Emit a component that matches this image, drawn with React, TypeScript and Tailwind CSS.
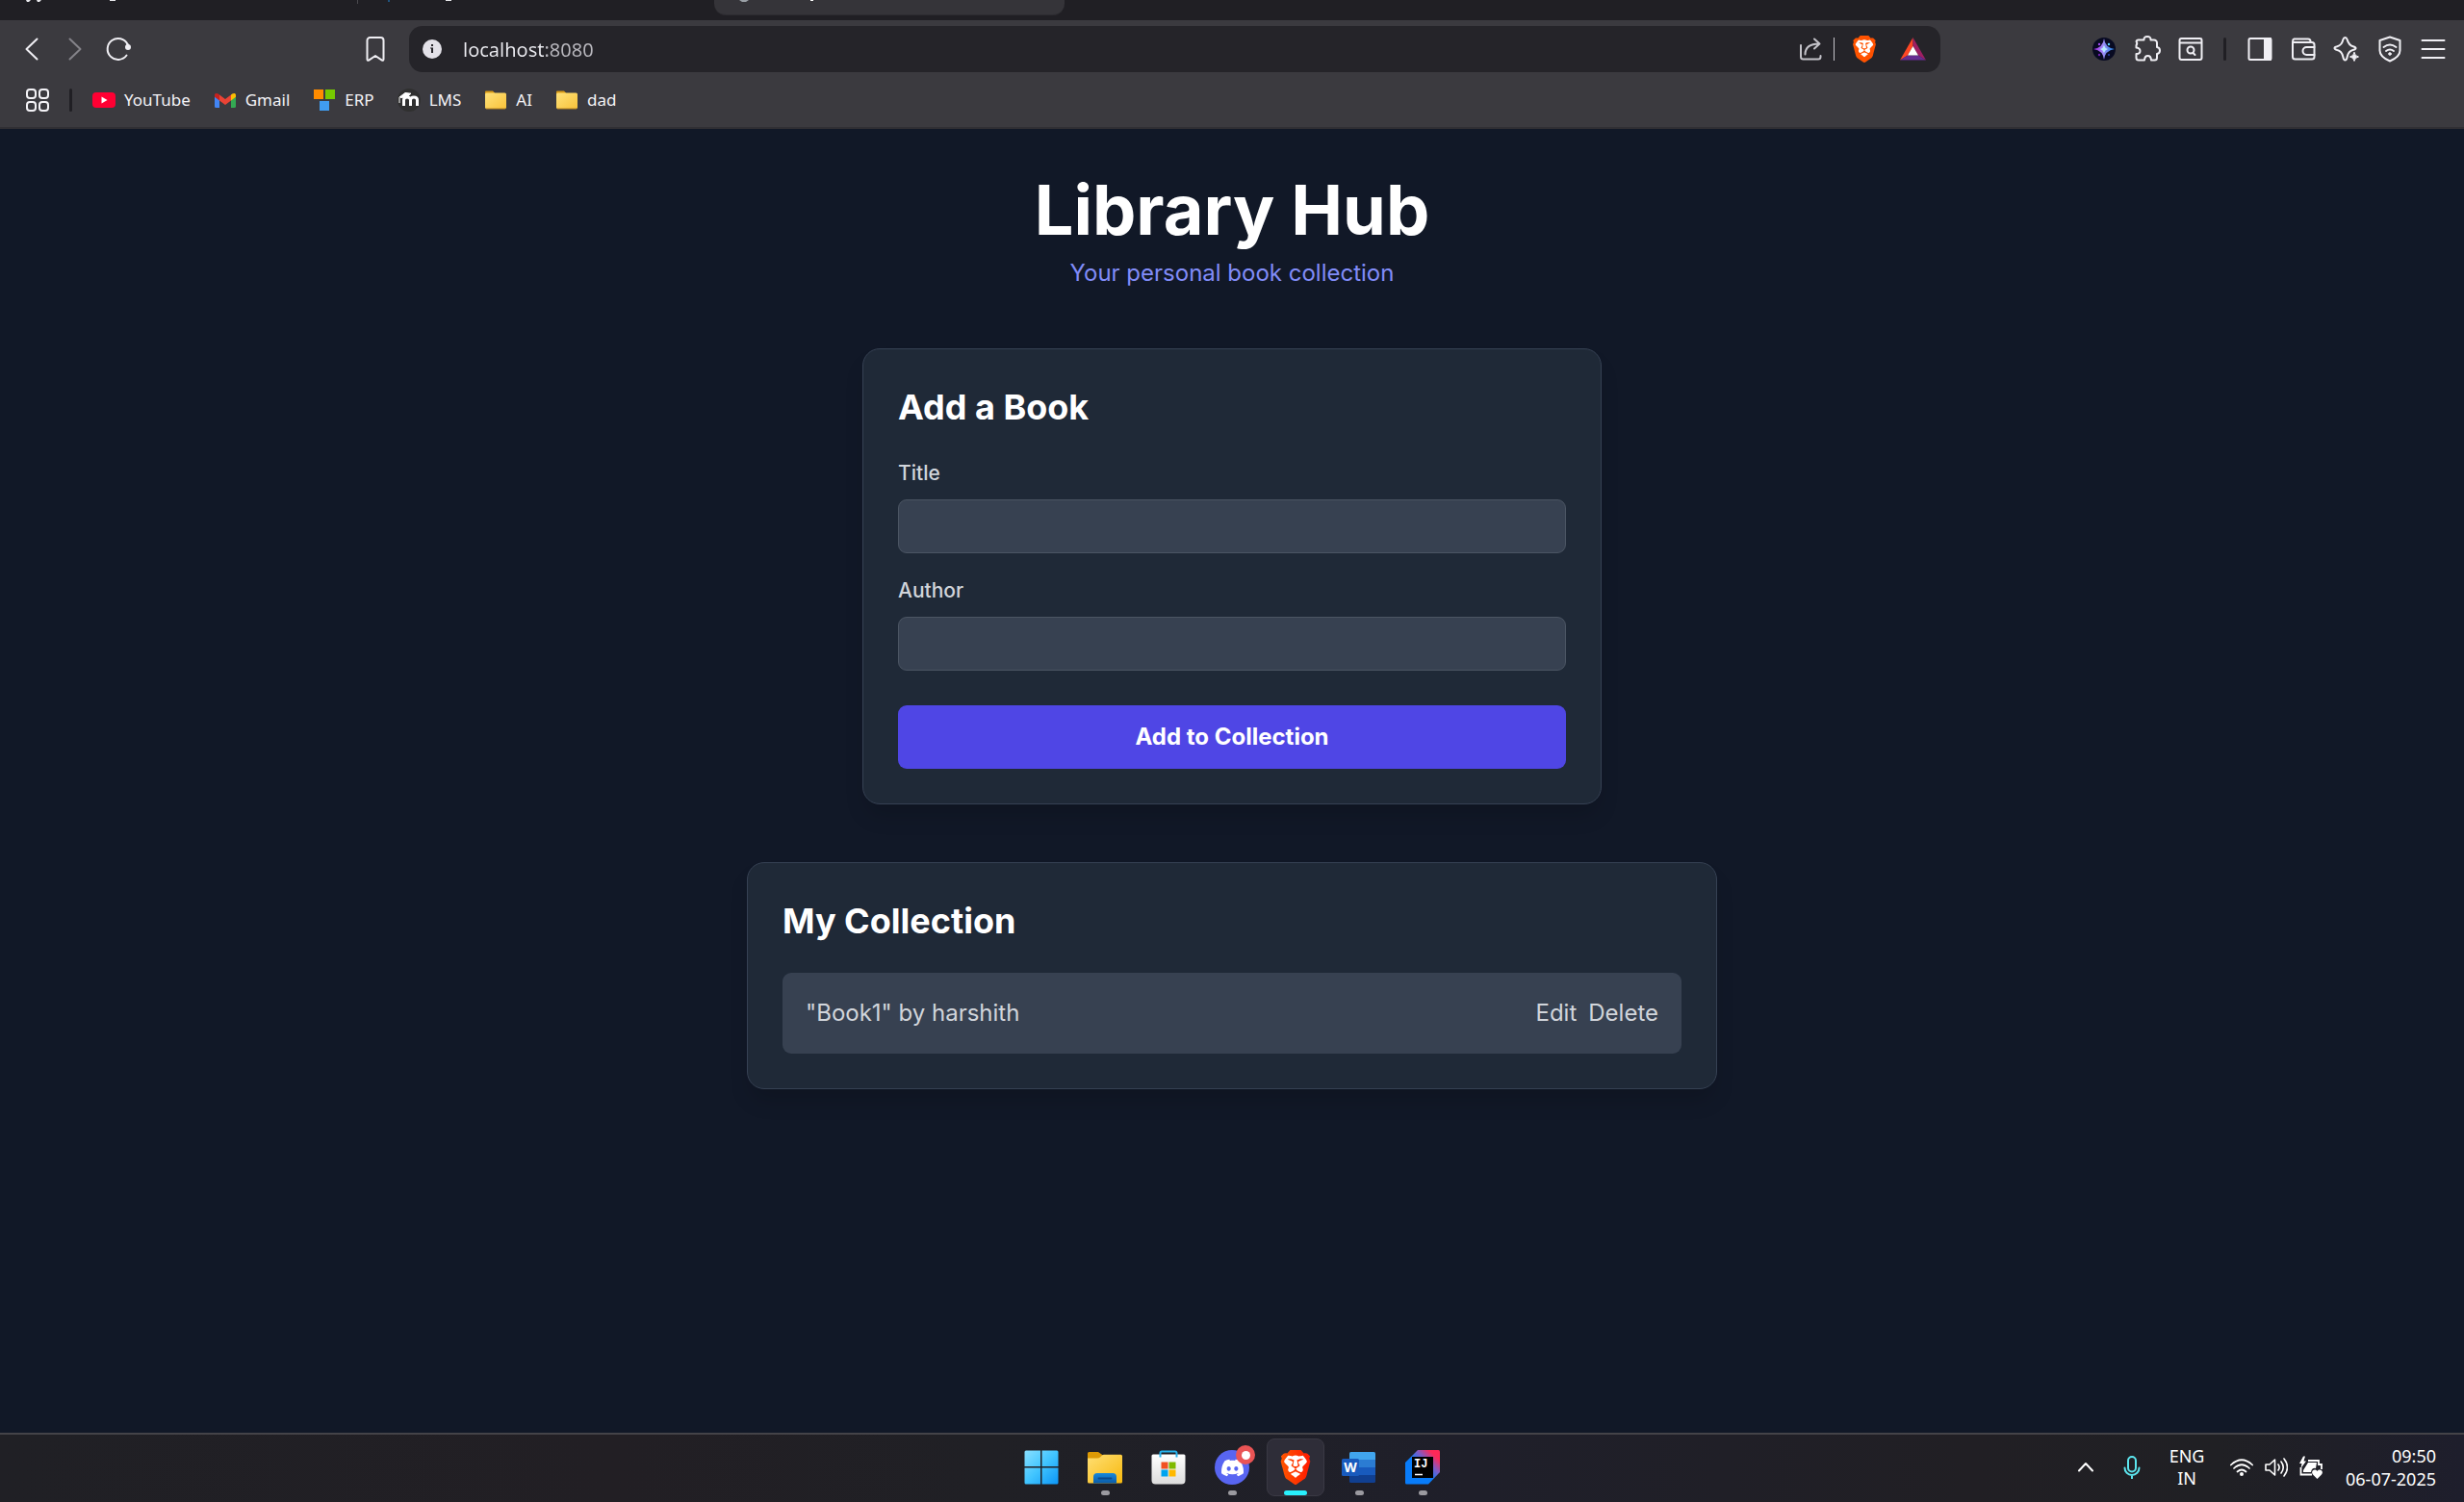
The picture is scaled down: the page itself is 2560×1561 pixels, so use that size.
import type { ReactNode } from "react";
import { SiBrave, SiDiscord } from "react-icons/si";

const UI_FONT = "font-['Noto_Sans','Open_Sans',sans-serif]";

function IconButton({ label, children }: { label: string; children: ReactNode }) {
  return (
    <button type="button" aria-label={label} className="flex h-12 w-[45px] shrink-0 items-center justify-center">
      {children}
    </button>
  );
}

function Stroke({ size = 30, width = 2, children }: { size?: number; width?: number; children: ReactNode }) {
  return (
    <svg width={size} height={size} viewBox="0 0 30 30" fill="none" stroke="currentColor" strokeWidth={width} strokeLinecap="round" strokeLinejoin="round">
      {children}
    </svg>
  );
}

function BraveLion({ size, id }: { size: number; id: string }) {
  return (
    <svg width={size} height={size} viewBox="0 0 24 24">
      <defs>
        <linearGradient id={id} x1="0" x2="1">
          <stop offset="0" stopColor="#ff5500" />
          <stop offset="1" stopColor={id === "lion-task" ? "#ff1a00" : "#ff5000"} />
        </linearGradient>
      </defs>
      <path d="M7 3h10l4 5-3 9-6 3-6-3-3-9z" fill="#fff" />
      <SiBrave size={24} style={{ fill: `url(#${id})` }} />
    </svg>
  );
}

/* ---------- Browser chrome ---------- */

function TabStrip() {
  return (
    <div className="flex h-[21px] bg-[#201f24]">
      <div className="h-1 w-[371px] overflow-hidden">
        <svg width="371" height="4" fill="#e8e8ec">
          <path d="M27 0h5l-2 2h-2zM38 0h5l-2 2h-2z" />
          <rect x="114" width="6" height="1" />
        </svg>
      </div>
      <div className="h-1 w-px bg-[#4a494e]" />
      <div className="h-1 w-[370px] overflow-hidden">
        <svg width="370" height="4">
          <rect x="31" width="2" height="2" fill="#20527c" />
          <rect x="91" width="6" height="1" fill="#e8e8ec" />
        </svg>
      </div>
      <div className="h-4 w-[364px] overflow-hidden rounded-b-xl border-b border-[#2c2b30] bg-[#353439]">
        <svg width="364" height="4">
          <path d="M26 0h10l-3 2h-4z" fill="#9aa0a6" />
          <rect x="100" width="3" height="1" fill="#fff" />
        </svg>
      </div>
    </div>
  );
}

function AddressBar() {
  return (
    <div className="flex h-12 min-w-0 flex-1 items-center rounded-[14px] bg-[#252429] pr-1 pl-[14px]">
      <button type="button" aria-label="View site information" className="shrink-0">
        <svg width="20" height="20" viewBox="0 0 20 20">
          <circle cx="10" cy="10" r="10" fill="#e3e1e8" />
          <rect x="9" y="5" width="2" height="2" fill="#252429" />
          <path d="M8 8.500h3V14H9v-4.500H8z" fill="#252429" />
        </svg>
      </button>
      <input
        type="text"
        aria-label="Address"
        defaultValue="localhost:8080"
        className="ml-[22px] h-8 min-w-0 flex-1 bg-[linear-gradient(90deg,#ececf1_84px,#b9b8be_84px)] bg-clip-text text-[20px] text-transparent outline-none"
      />
      <button type="button" aria-label="Share" className="flex w-12 justify-center text-[#c4c3c9]">
        <svg width="24" height="24" viewBox="0 0 24 24" fill="none" stroke="currentColor" strokeWidth="2" strokeLinecap="round" strokeLinejoin="round">
          <path d="M2 8v12a2.500 2.500 0 0 0 2.500 2.500H20a2.500 2.500 0 0 0 2.500-2.500v-1" />
          <path d="M6.500 17.500C6.500 10.500 11 6.500 21 6.500M16 1.500l5.500 5-5.500 5" />
        </svg>
      </button>
      <div className="mr-[6px] h-6 w-px bg-[#c4c3c9]" />
      <button type="button" aria-label="Brave Shields" className="flex w-[50px] justify-center">
        <BraveLion size={28} id="lion-bar" />
      </button>
      <button type="button" aria-label="Brave Rewards" className="flex w-[50px] justify-center">
        <svg width="27" height="24" viewBox="0 0 27 24">
          <path d="M13.500 0v9L8 18.500 0 23.500z" fill="#ff4724" />
          <path d="M13.500 0v9L19 18.500l8 5z" fill="#9e1f63" />
          <path d="M0 23.500 8 18.500h11l8 5z" fill="#662d91" />
          <path d="M13.500 9 19 18.500H8z" fill="#fff" />
        </svg>
      </button>
    </div>
  );
}

function Toolbar() {
  return (
    <div className="flex items-center pt-[6px] text-[#f0eff4]">
      <div className="flex w-[425px] shrink-0 justify-between pr-[13px] pl-[10px]">
        <div className="flex">
          <IconButton label="Back">
            <Stroke><path d="M20.500 4.500 9.500 15l11 10.500" /></Stroke>
          </IconButton>
          <IconButton label="Forward">
            <span className="text-[#848389]">
              <Stroke><path d="M9.500 4.500 20.500 15l-11 10.500" /></Stroke>
            </span>
          </IconButton>
          <IconButton label="Reload">
            <Stroke>
              <path d="M23.500 21.500A11 11 0 1 1 24.500 10" />
              <circle cx="25" cy="13" r="3" fill="currentColor" stroke="none" />
              <path d="M24.500 10l.5 3" />
            </Stroke>
          </IconButton>
        </div>
        <IconButton label="Bookmark this tab">
          <Stroke><path d="M6.500 25.500V6a3 3 0 0 1 3-3h11a3 3 0 0 1 3 3v19.500q0 2-2 .8L15 22l-6.500 4.300q-2 1.200-2-.8z" /></Stroke>
        </IconButton>
      </div>
      <AddressBar />
      <div className="flex w-[544px] shrink-0 items-center justify-end pr-[10px]">
        <IconButton label="Assistant extension">
          <svg width="24" height="24" viewBox="0 0 24 24">
            <defs>
              <linearGradient id="nova" x1="0" x2="1">
                <stop offset="0" stopColor="#a21ce0" />
                <stop offset=".45" stopColor="#a08cf5" />
                <stop offset="1" stopColor="#1687e8" />
              </linearGradient>
            </defs>
            <circle cx="12" cy="12" r="12" fill="#080a22" />
            <path d="M12 1q1 9.500 11 11-10 1.500-11 11-1-9.500-11-11 10-1.500 11-11z" fill="url(#nova)" />
            <path d="M12 8q.8 3.200 4 4-3.200.8-4 4-.8-3.200-4-4 3.200-.8 4-4z" fill="#b9ecff" />
            <circle cx="7" cy="7" r="1.200" fill="#a04cf0" />
            <circle cx="17" cy="7" r="1.200" fill="#5fd6ff" />
            <circle cx="7" cy="18" r="1.200" fill="#7022b0" />
            <circle cx="17" cy="18" r="1" fill="#2b3fae" />
          </svg>
        </IconButton>
        <IconButton label="Extensions">
          <Stroke>
            <path d="M5.500 5.500h6q-.3-3.500 3.500-3.500t3.500 3.500H22a3 3 0 0 1 3 3V13q3 .5 3 3.500T25 20v4a2.500 2.500 0 0 1-2.500 2.500H19q-.3-4.500-3.500-4.500t-3.500 4.500H6A2.500 2.500 0 0 1 3.500 24v-4q4 0 4-3t-4-3.500V11q1.500-2 0-4 .5-1.500 2-1.500z" />
          </Stroke>
        </IconButton>
        <IconButton label="Search tabs">
          <Stroke>
            <rect x="3.500" y="4" width="23" height="22" rx="2" />
            <path d="M4 8.500h22" />
            <circle cx="15" cy="16" r="3.500" />
            <path d="m17.500 19 2 2" />
          </Stroke>
        </IconButton>
        <div className="mx-3 h-6 w-[3px] rounded-full bg-[#201f24]" />
        <IconButton label="Sidebar">
          <Stroke>
            <rect x="3.500" y="4" width="23" height="22" rx="1.500" />
            <path d="M20 4h6v22h-6z" fill="currentColor" />
          </Stroke>
        </IconButton>
        <IconButton label="Wallet">
          <Stroke>
            <path d="M4 7.500V23a2.500 2.500 0 0 0 2.500 2.500H24a2.500 2.500 0 0 0 2.500-2.500V10.500A2.500 2.500 0 0 0 24 8H5.500A1.800 1.800 0 0 1 5.500 4.500H20A2.500 2.500 0 0 1 22.500 7v.5" />
            <path d="M26.500 13H18.500a4 4 0 0 0 0 8h8" />
          </Stroke>
        </IconButton>
        <IconButton label="Leo AI">
          <Stroke>
            <path d="M13.500 3q1.500 0 2.200 2.200 1.500 6 6.800 7.300 2.500 1 2 2t-3 1.500q-4.500 1-5.800 7Q15 26.500 13.500 26.500T11.300 23q-1.300-6-6-7-2.800-.7-2.800-2t2.800-1.800q5-1.200 6-7Q12 3 13.500 3z" />
            <path d="M23 18.500q.6 4 4.500 4.500-3.900.6-4.500 4.500-.6-3.900-4.500-4.500 3.900-.5 4.500-4.500z" fill="currentColor" strokeWidth="1" />
          </Stroke>
        </IconButton>
        <IconButton label="VPN">
          <Stroke>
            <path d="M15 2.500 25.500 6v10.500Q25.500 23 15 27.500 4.500 23 4.500 16.500V6z" />
            <path d="M8.500 13q6.500-5 13 0M11 17q4-3 8 0" />
            <circle cx="15" cy="20" r="1.300" fill="currentColor" strokeWidth="1" />
          </Stroke>
        </IconButton>
        <IconButton label="Menu">
          <Stroke><path d="M3.500 6h23M3.500 15h23M3.500 24h23" /></Stroke>
        </IconButton>
      </div>
    </div>
  );
}

function Folder() {
  return (
    <svg width="24" height="24" viewBox="0 0 24 24">
      <defs>
        <linearGradient id="folder" x1="0" y1="0" x2="1" y2="1">
          <stop offset="0" stopColor="#ffe27a" />
          <stop offset="1" stopColor="#f8c23a" />
        </linearGradient>
      </defs>
      <path d="M1 3.500a1 1 0 0 1 1-1h7l2 2v5H1z" fill="#d99a16" />
      <rect x="1" y="4.500" width="22" height="16.500" rx="1.500" fill="url(#folder)" />
      <path d="M2 21h20" stroke="#b98420" />
    </svg>
  );
}

const bookmarks: { name: string; icon: ReactNode }[] = [
  {
    name: "YouTube",
    icon: (
      <svg width="24" height="24" viewBox="0 0 24 24">
        <rect y="4" width="24" height="16" rx="4" fill="#ff0033" />
        <path d="M9.500 8.500v7l6-3.500z" fill="#fff" />
      </svg>
    ),
  },
  {
    name: "Gmail",
    icon: (
      <svg width="24" height="24" viewBox="0 0 24 24">
        <path d="M1 8v10.500A1.500 1.500 0 0 0 2.500 20H6V9z" fill="#4285f4" />
        <path d="M18 9v11h3.500a1.500 1.500 0 0 0 1.500-1.500V8z" fill="#34a853" />
        <path d="M6 6.500v6l6 4.500 6-4.500v-6l-6 4.500z" fill="#ea4335" />
        <path d="M1 6.500v2.300l5 3.700v-6l-1.200-.9C3.200 4.400 1 5 1 6.500z" fill="#c5221f" />
        <path d="M23 6.500v2.300l-5 3.700v-6l1.200-.9c1.600-1.200 3.800-.6 3.800.9z" fill="#fbbc04" />
      </svg>
    ),
  },
  {
    name: "ERP",
    icon: (
      <svg width="24" height="24" viewBox="0 0 24 24">
        <rect x="1" y="1" width="10" height="10" fill="#ff8c00" />
        <rect x="13" y="1" width="10" height="10" fill="#76c800" />
        <rect x="7" y="13" width="10" height="10" fill="#409cf0" />
      </svg>
    ),
  },
  {
    name: "LMS",
    icon: (
      <svg width="24" height="24" viewBox="0 0 24 24" fill="none">
        <circle cx="12" cy="12" r="12" fill="#303030" />
        <path d="M2 15V9l6-4.500 6 .7-4 3.800-7 .5" stroke="#fff" />
        <path d="M2 9l6-4.500 6 .7-4 3.800z" fill="#fff" />
        <path d="M6.500 18v-6q0-3 3.500-3t3.500 3v6M13.500 18v-6q0-3 3.500-3t3.500 3v6" stroke="#fff" strokeWidth="3" />
      </svg>
    ),
  },
  { name: "AI", icon: <Folder /> },
  { name: "dad", icon: <Folder /> },
];

function BookmarksBar() {
  return (
    <nav aria-label="Bookmarks" className="flex h-[57px] items-center pl-6 text-[17px] leading-6 text-[#f4f3f7]">
      <button type="button" aria-label="All bookmarks">
        <Stroke>
          <rect x="4" y="4" width="9" height="9" rx="3" />
          <rect x="17" y="4" width="9" height="9" rx="3" />
          <rect x="4" y="17" width="9" height="9" rx="3" />
          <rect x="17" y="17" width="9" height="9" rx="3" />
        </Stroke>
      </button>
      <div className="mr-[21px] ml-[18px] h-6 w-[3px] rounded-full bg-[#201f24]" />
      <div className="flex gap-6">
        {bookmarks.map((b) => (
          <a key={b.name} href="#" className="flex items-center gap-[9px]">
            {b.icon}
            {b.name}
          </a>
        ))}
      </div>
    </nav>
  );
}

/* ---------- Library page ---------- */

const CARD = "w-full rounded-[18px] border border-gray-700 bg-[#1f2937] p-9 shadow-[0_15px_22px_-4px_rgba(0,0,0,0.15)]";

function Field({ id, label }: { id: string; label: string }) {
  return (
    <div>
      <label htmlFor={id} className="mb-3 block text-[21px] leading-[30px] font-medium text-[#d1d5db]">
        {label}
      </label>
      <input id={id} type="text" className="block h-14 w-full rounded-[9px] border border-[#4b5563] bg-[#374151] px-4 text-2xl text-white outline-none" />
    </div>
  );
}

function LibraryPage() {
  return (
    <main className="flex flex-1 flex-col items-center bg-[#111827] pt-12 font-['Inter',sans-serif]">
      <header className="mb-[60px] text-center">
        <h1 className="text-7xl leading-[72px] font-bold text-white">Library Hub</h1>
        <p className="mt-3 text-2xl leading-9 text-[#818cf8]">Your personal book collection</p>
      </header>
      <section className={`${CARD} max-w-[768px]`}>
        <h2 className="mb-[30px] text-4xl leading-[48px] font-bold text-white">Add a Book</h2>
        <form className="flex flex-col gap-6" onSubmit={(e) => e.preventDefault()}>
          <Field id="title" label="Title" />
          <Field id="author" label="Author" />
          <button type="submit" className="mt-3 h-[66px] w-full rounded-[9px] bg-[#4f46e5] text-2xl leading-9 font-bold text-white">
            Add to Collection
          </button>
        </form>
      </section>
      <section className={`${CARD} mt-[60px] max-w-[1008px]`}>
        <h2 className="mb-[30px] text-4xl leading-[48px] font-bold text-white">My Collection</h2>
        <ul>
          <li className="flex items-center justify-between rounded-[9px] bg-[#374151] p-6 text-2xl leading-9 text-[#d1d5db]">
            <span>"Book1" by harshith</span>
            <div className="flex gap-3">
              <button type="button">Edit</button>
              <button type="button">Delete</button>
            </div>
          </li>
        </ul>
      </section>
    </main>
  );
}

/* ---------- Taskbar ---------- */

const apps: { name: string; state: "idle" | "open" | "active"; icon: ReactNode }[] = [
  {
    name: "Start",
    state: "idle",
    icon: (
      <svg width="36" height="36" viewBox="0 0 36 36">
        <defs>
          <linearGradient id="win" x1="0" y1="0" x2="36" y2="36" gradientUnits="userSpaceOnUse">
            <stop offset="0" stopColor="#8be0ff" />
            <stop offset=".5" stopColor="#40c4ff" />
            <stop offset="1" stopColor="#0a94f5" />
          </linearGradient>
        </defs>
        <path d="M2 .5h15v16.500H.5V2A1.500 1.500 0 0 1 2 .5zM18.500.5H34A1.500 1.500 0 0 1 35.500 2v15h-17zM.5 18.500H17v17H2A1.500 1.500 0 0 1 .5 34zM18.500 18.500h17V34a1.500 1.500 0 0 1-1.500 1.500H18.500z" fill="url(#win)" />
      </svg>
    ),
  },
  {
    name: "File Explorer",
    state: "open",
    icon: (
      <svg width="36" height="36" viewBox="0 0 36 36">
        <defs>
          <linearGradient id="exp" x1="0" y1="0" x2="1" y2="1">
            <stop offset="0" stopColor="#ffdf74" />
            <stop offset="1" stopColor="#f7b90f" />
          </linearGradient>
          <linearGradient id="expb" x1="0" y1="0" x2="0" y2="1">
            <stop offset="0" stopColor="#1689dc" />
            <stop offset="1" stopColor="#0a5ba8" />
          </linearGradient>
        </defs>
        <path d="M0 3.500A1.500 1.500 0 0 1 1.500 2H11l5 3.500L12 9H0z" fill="#dd9a05" />
        <path d="M0 8.500h10q2 0 3.500-1.500L15 5.500q.7-.7 2-.7h17.500A1.500 1.500 0 0 1 36 6.300v26.700a1.500 1.500 0 0 1-1.500 1.500h-33A1.500 1.500 0 0 1 0 33z" fill="url(#exp)" />
        <path d="M6 34.500V28a4 4 0 0 1 4-4h16a4 4 0 0 1 4 4v6.500z" fill="url(#expb)" />
        <path d="M11.500 29.500h13" stroke="#0b4a8c" strokeWidth="1.800" strokeLinecap="round" />
      </svg>
    ),
  },
  {
    name: "Microsoft Store",
    state: "idle",
    icon: (
      <svg width="36" height="36" viewBox="0 0 36 36">
        <defs>
          <linearGradient id="store" x1="0" y1="0" x2="0" y2="1">
            <stop offset="0" stopColor="#fff" />
            <stop offset="1" stopColor="#dcdcdc" />
          </linearGradient>
        </defs>
        <path d="M.5 6A1.500 1.500 0 0 1 2 4.500h32A1.500 1.500 0 0 1 35.500 6v25.500a4 4 0 0 1-4 4h-27a4 4 0 0 1-4-4z" fill="url(#store)" />
        <path d="M9.500 7.500V3A1.500 1.500 0 0 1 11 1.500h14A1.500 1.500 0 0 1 26.500 3v4.500" stroke="#27b3ee" strokeWidth="2" fill="none" />
        <path d="M10.500 12.500h7v7h-7z" fill="#f25022" />
        <path d="M18.500 12.500h7v7h-7z" fill="#7fba00" />
        <path d="M10.500 20.500h7v7h-7z" fill="#00a4ef" />
        <path d="M18.500 20.500h7v7h-7z" fill="#ffb900" />
      </svg>
    ),
  },
  {
    name: "Discord",
    state: "open",
    icon: (
      <span className="relative flex size-9 items-center justify-center rounded-full bg-[#5865f2]">
        <SiDiscord size={23} color="#fff" />
        <span className="absolute -top-[5px] -right-[6px] flex size-5 items-center justify-center rounded-full bg-[#ea5455]">
          <span className="size-[9px] rounded-full bg-white" />
        </span>
      </span>
    ),
  },
  { name: "Brave", state: "active", icon: <BraveLion size={36} id="lion-task" /> },
  {
    name: "Word",
    state: "open",
    icon: (
      <svg width="36" height="36" viewBox="0 0 36 36">
        <path d="M8 3.500A1.500 1.500 0 0 1 9.500 2h24A1.500 1.500 0 0 1 35 3.500V10H8z" fill="#41a5ee" />
        <path d="M8 10h27v8H8z" fill="#2b7cd3" />
        <path d="M8 18h27v8H8z" fill="#185abd" />
        <path d="M8 26h27v6.500a1.500 1.500 0 0 1-1.500 1.500h-24A1.500 1.500 0 0 1 8 32.500z" fill="#103f91" />
        <rect y="9" width="18" height="18" rx="1.500" fill="#185abd" />
        <text x="9" y="23" textAnchor="middle" fontSize="14" fontWeight="700" fill="#fff">W</text>
      </svg>
    ),
  },
  {
    name: "IntelliJ IDEA",
    state: "open",
    icon: (
      <svg width="36" height="36" viewBox="0 0 36 36">
        <defs>
          <linearGradient id="ij" x1="0" y1="1" x2="1" y2="0">
            <stop offset=".45" stopColor="#087cfa" />
            <stop offset=".65" stopColor="#7b5cc8" />
            <stop offset=".85" stopColor="#fe2857" />
          </linearGradient>
        </defs>
        <path d="M13 0h21.500A1.500 1.500 0 0 1 36 1.500V23L24 35.500H1.500A1.500 1.500 0 0 1 0 34V13z" fill="url(#ij)" />
        <path d="M7 7h22v22H7z" fill="#000" />
        <text x="9" y="18" fontSize="12" fontWeight="700" fill="#fff" fontFamily="Liberation Mono, monospace">IJ</text>
        <path d="M10 25.500h8" stroke="#fff" strokeWidth="1.500" />
      </svg>
    ),
  },
];

function TaskbarApp({ name, state, icon }: (typeof apps)[number]) {
  return (
    <button
      type="button"
      aria-label={name}
      className={`relative flex size-[60px] items-center justify-center rounded-lg border ${state === "active" ? "border-[#3a3944] bg-[#2e2d38]" : "border-transparent"}`}
    >
      {icon}
      {state !== "idle" && (
        <span className={`absolute bottom-0 h-[5px] rounded-full ${state === "active" ? "w-6 bg-[#28f0fc]" : "w-[9px] bg-[#9b9aa0]"}`} />
      )}
    </button>
  );
}

function Taskbar() {
  return (
    <footer className="grid h-[72px] grid-cols-[1fr_auto_1fr] items-center border-t-2 border-[#444348] bg-[linear-gradient(90deg,#202025,#221f24_25%,#202025_40%,#1f1f2a_60%,#211f24_80%,#202024_90%,#1e1e2c)] pb-[2px] text-lg text-white">
      <div />
      <div className="flex gap-[6px]">
        {apps.map((a) => (
          <TaskbarApp key={a.name} {...a} />
        ))}
      </div>
      <div className="flex items-center justify-end pr-[29px]">
        <button type="button" aria-label="Show hidden icons" className="flex w-12 justify-center">
          <svg width="24" height="24" viewBox="0 0 24 24" fill="none" stroke="currentColor" strokeWidth="2" strokeLinecap="round" strokeLinejoin="round">
            <path d="m5 15.500 7-7.500 7 7.500" />
          </svg>
        </button>
        <button type="button" aria-label="Microphone in use" className="flex w-12 justify-center text-[#5ce5ee]">
          <svg width="24" height="24" viewBox="0 0 24 24" fill="none" stroke="currentColor" strokeWidth="2" strokeLinecap="round">
            <rect x="8" y="1" width="8" height="15.500" rx="4" />
            <path d="M4.500 12.500a7.500 7.500 0 0 0 15 0M12 20v3.500" />
          </svg>
        </button>
        <button type="button" aria-label="Input language" className="w-[66px] text-center leading-[23px]">
          ENG
          <br />
          IN
        </button>
        <button type="button" aria-label="Quick settings" className="flex gap-3 px-3">
          <svg width="24" height="24" viewBox="0 0 24 24" fill="none" stroke="currentColor" strokeWidth="1.700" strokeLinecap="round">
            <path d="M.8 9.500q11.200-10.500 22.400 0M4 13q8-7.500 16 0M7.500 16.500q4.500-4 9 0" />
            <circle cx="12" cy="19" r="2" fill="currentColor" stroke="none" />
          </svg>
          <svg width="24" height="24" viewBox="0 0 24 24" fill="none" stroke="currentColor" strokeWidth="1.600" strokeLinecap="round" strokeLinejoin="round">
            <path d="M1 9v6h4l5.500 5V4L5 9zM14 9q2.200 3 0 6M17 6q4.500 6 0 12M20 3q7 9 0 18" />
          </svg>
          <svg width="24" height="24" viewBox="0 0 24 24" fill="currentColor">
            <path d="M4 .5 0 8h2.500L1.500 13 7 5.500H4.500L6 .5z" />
            <path d="M9 5h11v4h3v5M1.500 12v7.500H13" fill="none" stroke="currentColor" strokeWidth="1.800" />
            <path d="M9 7h9l-1 6q-4-1-5 4H4v-2z" />
            <path d="M18.500 24 14 19.500c-3-3.500 2-7 4.500-3.500 2.500-3.500 7.500 0 4.500 3.500z" />
          </svg>
        </button>
        <button type="button" aria-label="Clock" className="ml-3 text-right leading-6">
          09:50
          <br />
          06-07-2025
        </button>
      </div>
    </footer>
  );
}

export default function App() {
  return (
    <div className={`flex min-h-screen flex-col ${UI_FONT}`}>
      <div className="border-b-2 border-[#302f34] bg-[#3b3a3f]">
        <TabStrip />
        <Toolbar />
        <BookmarksBar />
      </div>
      <LibraryPage />
      <Taskbar />
    </div>
  );
}
